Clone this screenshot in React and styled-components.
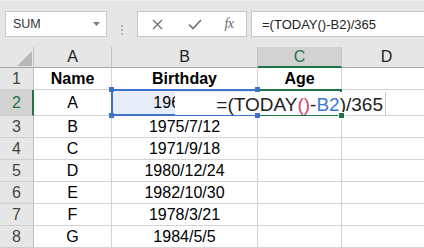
import React from 'react';
import styled, { createGlobalStyle, css } from 'styled-components';

const Global = createGlobalStyle`
  html, body { margin: 0; padding: 0; background: #fff; overflow: hidden; }
  body { font-family: "Liberation Sans", Arial, sans-serif; }
`;

const GREEN = '#217346';
const BLUE = '#3d72c6';

const Page = styled.div`
  width: 424px;
  height: 248px;
  overflow: hidden;
  display: flex;
  flex-direction: column;
  background: #fff;
`;

const FormulaBar = styled.div`
  height: 47px;
  flex: none;
  box-sizing: border-box;
  background: #e6e6e6;
  border-top: 1px solid #f0f0f0;
  display: flex;
  align-items: flex-start;
  padding: 10px 0 0 5px;
`;

const NameBox = styled.div`
  width: 102px;
  height: 26px;
  box-sizing: border-box;
  background: #fff;
  border: 1px solid #c6c6c6;
  display: flex;
  align-items: center;
  justify-content: space-between;
  padding: 0 6px 0 7px;
  font-size: 12.5px;
  color: #333;
`;

const Grip = styled.div`
  margin: 0 14px 0 14px;
  align-self: center;
  display: flex;
  flex-direction: column;
  gap: 2px;
  padding-top: 1px;
`;

const Dot = styled.span`
  width: 2px;
  height: 2px;
  background: #b0b0b0;
`;

const ButtonBox = styled.div`
  width: 110px;
  height: 26px;
  box-sizing: border-box;
  background: #fff;
  border: 1px solid #c6c6c6;
  display: grid;
  grid-template-columns: 39px 35px 34px;
  align-items: center;
  justify-items: center;
`;

const Fx = styled.span`
  font-family: "Liberation Serif", "Times New Roman", serif;
  font-style: italic;
  font-size: 14px;
  color: #666;
  letter-spacing: -0.5px;
`;

const FormulaInput = styled.div`
  flex: 1;
  margin-left: 4px;
  margin-right: -2px;
  height: 26px;
  box-sizing: border-box;
  background: #fff;
  border: 1px solid #c6c6c6;
  display: flex;
  align-items: center;
  padding-left: 10px;
  font-size: 13px;
  color: #222;
  white-space: nowrap;
`;

const Sheet = styled.div`
  display: grid;
  grid-template-columns: 34px 78px 146px 84px 90px;
  grid-template-rows: 21px 22px 26px repeat(6, 22px);
  font-size: 16px;
`;

const Corner = styled.div`
  box-sizing: border-box;
  background: #e6e6e6;
  border-right: 1px solid #c3c3c3;
  border-bottom: 1px solid #a6a6a6;
  display: flex;
  justify-content: flex-end;
  align-items: flex-end;
  padding: 0 1px 1px 0;
`;

const ColHeader = styled.div`
  box-sizing: border-box;
  background: ${(p) => (p.$selected ? '#d2d2d2' : '#e6e6e6')};
  border-right: 1px solid #c3c3c3;
  border-bottom: ${(p) => (p.$selected ? `2px solid ${GREEN}` : '1px solid #a6a6a6')};
  color: ${(p) => (p.$selected ? GREEN : '#222')};
  display: flex;
  align-items: center;
  justify-content: center;
  padding-top: ${(p) => (p.$selected ? '1px' : '0')};
`;

const RowHeader = styled.div`
  box-sizing: border-box;
  background: ${(p) => (p.$selected ? '#d2d2d2' : '#e6e6e6')};
  border-right: ${(p) => (p.$selected ? `2px solid ${GREEN}` : '1px solid #bdbdbd')};
  border-bottom: 1px solid #cdcdcd;
  color: ${(p) => (p.$selected ? GREEN : '#444')};
  display: flex;
  align-items: center;
  justify-content: center;
  padding-left: ${(p) => (p.$selected ? '1px' : '0')};
`;

const Cell = styled.div`
  position: relative;
  box-sizing: border-box;
  border-right: 1px solid #d4d4d4;
  border-bottom: 1px solid #d4d4d4;
  background: ${(p) => p.$fill || '#fff'};
  color: #000;
  font-weight: ${(p) => (p.$bold ? 700 : 400)};
  display: flex;
  align-items: center;
  justify-content: center;
  white-space: nowrap;
`;

const Frame = styled.div`
  position: absolute;
  top: -1px;
  left: -1px;
  right: -1px;
  bottom: -1px;
  border: 2px solid ${(p) => p.$color};
  pointer-events: none;
`;

const Handle = styled.span`
  position: absolute;
  width: 5px;
  height: 5px;
  background: ${(p) => p.$color};
  z-index: 3;
  ${(p) => (p.$top ? css`top: -3px;` : css`bottom: -3px;`)}
  ${(p) => (p.$left ? css`left: -3px;` : css`right: -3px;`)}
`;

const FillHandle = styled.span`
  position: absolute;
  width: 5px;
  height: 5px;
  background: ${GREEN};
  border: 1px solid #fff;
  right: -4px;
  bottom: -4px;
  z-index: 3;
`;

const Editor = styled.div`
  position: absolute;
  left: 63px;
  top: 2px;
  width: 211px;
  height: 23px;
  box-sizing: border-box;
  background: #fff;
  border-right: 1px solid #c8c8c8;
  z-index: 2;
  display: flex;
  align-items: center;
  justify-content: flex-end;
  padding: 2px 2px 0 0;
  font-size: 19px;
  font-weight: 400;
  color: #222;
`;

const Paren = styled.span`
  color: #d8406e;
`;

const Ref = styled.span`
  color: #3b78d6;
`;

const CloseIcon = () => (
  <svg width="11" height="11" viewBox="0 0 11 11">
    <path d="M1 1 L10 10 M10 1 L1 10" stroke="#707070" strokeWidth="1.3" fill="none" />
  </svg>
);

const CheckIcon = () => (
  <svg width="14" height="11" viewBox="0 0 14 11">
    <path d="M1 5.5 L5 9.5 L13 1" stroke="#707070" strokeWidth="1.6" fill="none" />
  </svg>
);

const DropArrow = () => (
  <svg width="7" height="4" viewBox="0 0 7 4">
    <path d="M0 0 L7 0 L3.5 4 Z" fill="#7a7a7a" />
  </svg>
);

const CornerTriangle = () => (
  <svg width="15" height="15" viewBox="0 0 15 15">
    <path d="M15 0 L15 15 L0 15 Z" fill="#b7b7b7" />
  </svg>
);

const rows = [
  ['B', '1975/7/12'],
  ['C', '1971/9/18'],
  ['D', '1980/12/24'],
  ['E', '1982/10/30'],
  ['F', '1978/3/21'],
  ['G', '1984/5/5'],
];

export default function App() {
  return (
    <Page>
      <Global />
      <FormulaBar>
        <NameBox>
          <span>SUM</span>
          <DropArrow />
        </NameBox>
        <Grip>
          <Dot />
          <Dot />
          <Dot />
        </Grip>
        <ButtonBox>
          <CloseIcon />
          <CheckIcon />
          <Fx>fx</Fx>
        </ButtonBox>
        <FormulaInput>=(TODAY()-B2)/365</FormulaInput>
      </FormulaBar>
      <Sheet>
        <Corner>
          <CornerTriangle />
        </Corner>
        <ColHeader>A</ColHeader>
        <ColHeader>B</ColHeader>
        <ColHeader $selected>C</ColHeader>
        <ColHeader>D</ColHeader>

        <RowHeader>1</RowHeader>
        <Cell $bold>Name</Cell>
        <Cell $bold>Birthday</Cell>
        <Cell $bold>Age</Cell>
        <Cell />

        <RowHeader $selected>2</RowHeader>
        <Cell>A</Cell>
        <Cell $fill="#e7edf8">
          1968/5/4
          <Frame $color={BLUE} />
          <Handle $color={BLUE} $top $left />
          <Handle $color={BLUE} $left />
          <Handle $color={BLUE} $top />
          <Handle $color={BLUE} />
          <Editor>
            =(TODAY<Paren>()</Paren>-<Ref>B2</Ref>)/365
          </Editor>
        </Cell>
        <Cell>
          <Frame $color={GREEN} />
          <FillHandle />
        </Cell>
        <Cell />

        {rows.map(([name, date], i) => (
          <React.Fragment key={name}>
            <RowHeader>{i + 3}</RowHeader>
            <Cell>{name}</Cell>
            <Cell>{date}</Cell>
            <Cell />
            <Cell />
          </React.Fragment>
        ))}
      </Sheet>
    </Page>
  );
}
